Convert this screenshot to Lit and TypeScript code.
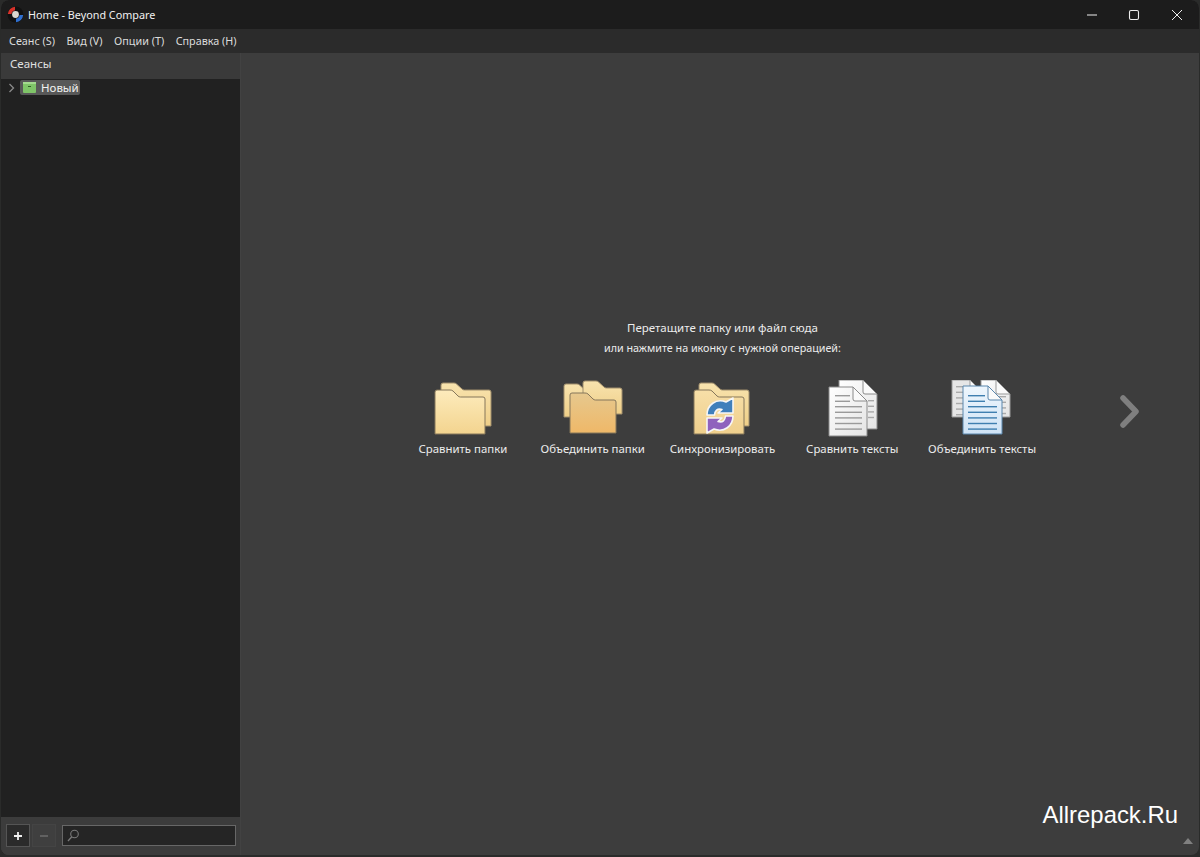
import { LitElement, html, css, svg } from "lit";
import { customElement } from "lit/decorators.js";

const defs = svg`
<defs>
  <linearGradient id="fa" x1="0" y1="0" x2="0" y2="1"><stop offset="0" stop-color="#fdebbc"/><stop offset="1" stop-color="#f3d48f"/></linearGradient>
  <linearGradient id="fb" x1="0" y1="0" x2="0" y2="1"><stop offset="0" stop-color="#f8e3ae"/><stop offset="1" stop-color="#efcf88"/></linearGradient>
  <linearGradient id="fc" x1="0" y1="0" x2="0" y2="1"><stop offset="0" stop-color="#e6c88e"/><stop offset="1" stop-color="#efb868"/></linearGradient>
  <linearGradient id="fd" x1="0" y1="0" x2="0" y2="1"><stop offset="0" stop-color="#f7dfa8"/><stop offset="1" stop-color="#efcf8c"/></linearGradient>
  <linearGradient id="dw" x1="0" y1="0" x2="1" y2="1"><stop offset="0" stop-color="#ffffff"/><stop offset="1" stop-color="#e4e4e4"/></linearGradient>
  <linearGradient id="db" x1="0" y1="0" x2="0" y2="1"><stop offset="0" stop-color="#eef6fd"/><stop offset="1" stop-color="#cfe3f5"/></linearGradient>
</defs>`;

const backFolder = (x: number, y: number, w: number, h: number, fill: string) => svg`
  <path d="M${x} ${y + 8} v-6 q0 -2 2 -2 h11 q1.500 0 2.500 1 l5.500 5 q1 1 2.500 1 h${w - 25.5} q2 0 2 2 v${h - 9} h-${w} z"
    fill="${fill}" stroke="#a08e6c" stroke-width="1"/>`;

const frontFolder = (x: number, y: number, w: number, h: number, fill: string) => svg`
  <path d="M${x} ${y + 2} q0 -2 2 -2 h13 q2 0 3 1 l5 5 q1 1 2.500 1 h${w - 27.5} q2 0 2 2 v${h - 9} h-${w} z"
    fill="${fill}" stroke="#85765a" stroke-width="1"/>`;

const lines = (x: number, y: number, w: number, n: number, color: string) => {
  const out = [];
  for (let i = 0; i < n; i++) {
    out.push(svg`<rect x="${x}" y="${y + i * 5.6}" width="${w}" height="1.400" fill="${color}"/>`);
  }
  return out;
};

const doc = (x: number, y: number, w: number, h: number, fill: string, stroke: string) => svg`
  <path d="M${x} ${y} h${w - 14} l14 14 v${h - 14} h-${w} z" fill="${fill}" stroke="${stroke}" stroke-width="1"/>
  <path d="M${x + w - 14} ${y} v12 q0 2 2 2 h12 z" fill="#fafafa" stroke="${stroke}" stroke-width="1"/>`;

const arrow = "M17 35 C17 25 26 18 36 22 L43 18 L43 33 L28 33 L32 29.500 C27 28 25 31 24.500 35 Z";

const icons = [
  svg`<svg class="ico" viewBox="0 0 64 60">${defs}
    ${backFolder(10, 3, 50, 43, "url(#fb)")}
    ${frontFolder(4, 10, 50, 44, "url(#fa)")}
  </svg>`,
  svg`<svg class="ico" viewBox="0 0 64 60">
    ${backFolder(3, 4, 30, 33, "url(#fb)")}
    ${backFolder(22, 1, 39, 33, "url(#fb)")}
    ${frontFolder(9, 13, 46, 40, "url(#fc)")}
  </svg>`,
  svg`<svg class="ico" viewBox="0 0 64 60">
    ${backFolder(9, 3, 50, 43, "url(#fb)")}
    ${frontFolder(4, 10, 50, 44, "url(#fd)")}
    <g stroke="#f6f6f6" stroke-width="1.600" stroke-linejoin="round">
      <path d="${arrow}" fill="#3f7fbb"/>
      <path d="${arrow}" fill="#8f62bd" transform="rotate(180 30 35.500)"/>
    </g>
  </svg>`,
  svg`<svg class="ico" viewBox="0 0 64 60">
    <g>${doc(19, 0, 38, 49, "url(#dw)", "#8a8a8a")}${lines(48, 20, 6, 4, "#a8a8a8")}</g>
    <g>${doc(9, 7, 38, 49, "url(#dw)", "#8a8a8a")}${lines(15, 15, 15, 2, "#9a9a9a")}${lines(15, 26, 27, 5, "#9a9a9a")}</g>
  </svg>`,
  svg`<svg class="ico" viewBox="0 0 64 60">
    <g>${doc(2, 0, 32, 37, "#e6e6e6", "#999")}${lines(6, 6, 14, 6, "#aaaaaa")}</g>
    <g>${doc(31, 0, 29, 37, "url(#dw)", "#999")}${lines(46, 16, 10, 4, "#aaaaaa")}</g>
    <g>${doc(13, 6, 39, 48, "url(#db)", "#5b87ad")}${lines(18, 15, 17, 2, "#3f7fb0")}${lines(18, 26, 29, 5, "#3f7fb0")}</g>
  </svg>`,
];

const tiles = ["Сравнить папки", "Объединить папки", "Синхронизировать", "Сравнить тексты", "Объединить тексты"];
const menus = ["Сеанс (S)", "Вид (V)", "Опции (T)", "Справка (H)"];

@customElement("app-root")
export class AppRoot extends LitElement {
  static styles = css`
    :host { display: block; width: 1200px; height: 857px; background: #2a2b2a; font-family: "Noto Sans", "Open Sans", sans-serif; font-size: 12px; color: #e6e6e6; overflow: hidden; position: relative; }
    .win { display: flex; flex-direction: column; height: 855px; margin: 0 1px; border-radius: 8px; overflow: hidden; background: #3d3d3d; position: relative; }
    .title { height: 29px; flex: none; display: flex; align-items: center; background: #1c1c1c; padding: 0 1px 0 6px; }
    .title .name { margin-left: 4px; color: #f0f0f0; font-size: 10.800px; flex: 1; }
    .ctl { width: 42.500px; height: 29px; display: flex; align-items: center; justify-content: center; }
    .ctl svg { width: 12px; height: 12px; }
    .menu { height: 24px; flex: none; display: flex; align-items: center; gap: 11.500px; background: #2b2b2b; padding: 0 0 2px 8px; box-sizing: border-box; color: #dcdcdc; font-size: 10.800px; }
    .body { flex: 1; display: flex; min-height: 0; }
    .side { width: 239px; flex: none; display: flex; flex-direction: column; background: #3c3c3c; }
    .side-h { height: 26px; flex: none; box-sizing: border-box; display: flex; align-items: center; padding: 0 0 5px 9px; color: #e0e0e0; font-size: 11.500px; background: #3a3a3a; }
    .tree { flex: 1; background: #212121; padding: 1px 0 0 7px; }
    .row { display: flex; align-items: center; height: 15px; }
    .row > svg { width: 8px; height: 10px; margin-right: 4px; }
    .sel { display: flex; align-items: center; gap: 5px; height: 15px; width: 60px; box-sizing: border-box; padding: 0 0 1px 3px; background: #585858; border-radius: 2px; color: #f0f0f0; font-size: 11.500px; }
    .sel svg { width: 13px; height: 11px; }
    .foot { height: 37px; flex: none; display: flex; align-items: center; padding: 0 4px 1px 5px; background: #3c3c3c; }
    .btn { width: 24px; height: 23px; box-sizing: border-box; display: flex; align-items: center; justify-content: center; border: 1px solid transparent; }
    .btn svg { width: 10px; height: 10px; }
    .btn.on { background: #2b2b2b; border-color: #555; }
    .btn.off { background: #3f3f3f; border-color: #444; margin-left: 2px; }
    .search { flex: 1; height: 21px; margin-left: 6px; box-sizing: border-box; border: 1px solid #676767; background: #252525; display: flex; align-items: center; padding-left: 4px; }
    .search svg { width: 12px; height: 13px; }
    .main { flex: 1; border-left: 1px solid #424242; display: flex; flex-direction: column; align-items: stretch; justify-content: center; padding: 0 0 0 5px; box-sizing: border-box; }
    .wrap { padding-bottom: 133px; display: flex; flex-direction: column; align-items: center; }
    .hint { font-size: 11.500px; line-height: 20px; text-align: center; color: #ececec; }
    .hint.small { font-size: 10.750px; }
    .tiles { margin-top: 22px; width: 100%; display: grid; grid-template-columns: 1fr auto 1fr; align-items: center; }
    .set { grid-column: 2; display: grid; grid-template-columns: repeat(5, 129.800px); }
    .tile { display: flex; flex-direction: column; align-items: center; }
    .ico { width: 64px; height: 60px; display: block; }
    .tile span { margin-top: 1px; font-size: 11.400px; line-height: 16px; color: #ececec; white-space: nowrap; }
    .next { grid-column: 3; margin-left: 72px; padding-bottom: 14px; }
    .next svg { display: block; width: 21px; height: 33px; }
    .mark { position: absolute; right: 21px; bottom: 26px; font-family: "Liberation Sans", Arial, sans-serif; font-size: 23.900px; line-height: 28px; color: #fff; }
    .grip { position: absolute; right: 6px; bottom: 11px; width: 0; height: 0; border-left: 5px solid transparent; border-right: 5px solid transparent; border-bottom: 6px solid #808080; }
  `;

  render() {
    return html`
      <div class="win">
        <div class="title">
          <svg width="17" height="17" viewBox="0 0 17 17">
            <circle cx="8.500" cy="8.500" r="8" fill="#111"/>
            <path d="M0.800 8 A8 8 0 0 1 8 0.800 L8 4.500 A4 4 0 0 0 4.500 8 Z" fill="#d8322a"/>
            <path d="M16.200 9 A8 8 0 0 1 9 16.200 L9 12.500 A4 4 0 0 0 12.500 9 Z" fill="#2f6fd0"/>
            <circle cx="8.500" cy="8.500" r="3.400" fill="#dcd8d0"/>
          </svg>
          <span class="name">Home - Beyond Compare</span>
          <div class="ctl"><svg viewBox="0 0 12 12"><path d="M1 6h10" stroke="#eee" stroke-width="1.200"/></svg></div>
          <div class="ctl"><svg viewBox="0 0 12 12"><rect x="1.500" y="1.500" width="9" height="9" rx="1.500" fill="none" stroke="#eee" stroke-width="1.100"/></svg></div>
          <div class="ctl"><svg viewBox="0 0 12 12"><path d="M1 1l10 10M11 1L1 11" stroke="#eee" stroke-width="1"/></svg></div>
        </div>
        <div class="menu">${menus.map((m) => html`<span>${m}</span>`)}</div>
        <div class="body">
          <aside class="side">
            <div class="side-h">Сеансы</div>
            <div class="tree">
              <div class="row">
                <svg viewBox="0 0 8 10"><path d="M1.500 1l4 4-4 4" fill="none" stroke="#8a8a8a" stroke-width="1.300"/></svg>
                <div class="sel">
                  <svg viewBox="0 0 13 11"><rect x="0" y="0" width="13" height="11" rx="1" fill="#7fc468"/><rect x="0" y="0" width="13" height="2" fill="#a3d98e"/><rect x="5" y="4" width="3" height="1" fill="#2f5f26"/></svg>
                  <span>Новый</span>
                </div>
              </div>
            </div>
            <div class="foot">
              <div class="btn on"><svg viewBox="0 0 10 10"><path d="M5 1v8M1 5h8" stroke="#f0f0f0" stroke-width="1.800"/></svg></div>
              <div class="btn off"><svg viewBox="0 0 10 10"><path d="M1 5h8" stroke="#6e6e6e" stroke-width="1.500"/></svg></div>
              <div class="search"><svg viewBox="0 0 12 13"><circle cx="7.500" cy="5" r="3.800" fill="none" stroke="#7a7a7a" stroke-width="1.100"/><path d="M4.800 7.800L1 12" stroke="#7a7a7a" stroke-width="1.300"/></svg></div>
            </div>
          </aside>
          <main class="main">
            <div class="wrap">
              <div class="hint">Перетащите папку или файл сюда</div>
              <div class="hint small">или нажмите на иконку с нужной операцией:</div>
              <div class="tiles">
                <div class="set">
                  ${tiles.map((t, i) => html`<div class="tile">${icons[i]}<span>${t}</span></div>`)}
                </div>
                <div class="next"><svg viewBox="0 0 21 33"><path d="M4 3l13 13.500L4 30" fill="none" stroke="#7f7f7f" stroke-width="5.500" stroke-linecap="round" stroke-linejoin="round"/></svg></div>
              </div>
            </div>
          </main>
        </div>
        <div class="mark">Allrepack.Ru</div>
        <div class="grip"></div>
      </div>
    `;
  }
}
